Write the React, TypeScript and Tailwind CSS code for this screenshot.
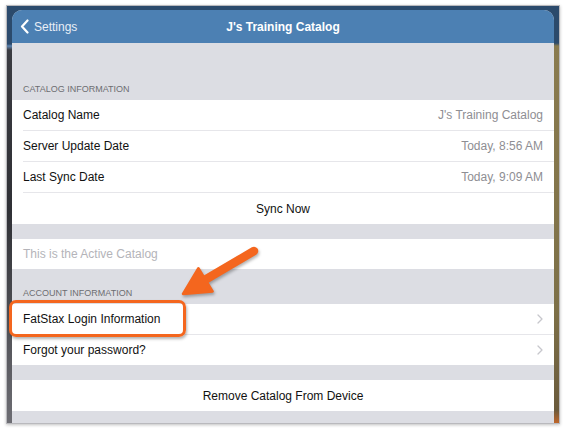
const FONT = { fontFamily: '"Liberation Sans", Arial, sans-serif' };

function Chevron() {
  return (
    <svg width="6" height="10" viewBox="0 0 6 10" aria-hidden>
      <path d="M1 1l4 4-4 4" fill="none" stroke="#c7c7cc" strokeWidth="1.3" strokeLinecap="round" strokeLinejoin="round" />
    </svg>
  );
}

function SectionLabel({ text, height }: { text: string; height: string }) {
  return (
    <div className={`flex items-end px-[11px] pb-[6px] ${height}`}>
      <span className="text-[9px] uppercase leading-[10px] text-[#6d6d72]">{text}</span>
    </div>
  );
}

function Row({
  label,
  value,
  chevron,
  divider,
}: {
  label: string;
  value?: string;
  chevron?: boolean;
  divider?: boolean;
}) {
  return (
    <div className="flex h-[31px] flex-col bg-white pl-[11px]">
      <div className="flex flex-1 items-center justify-between pr-[11px] text-[12px]">
        <span className="text-[#111]">{label}</span>
        {value && <span className="text-[#8e8e93]">{value}</span>}
        {chevron && <Chevron />}
      </div>
      {divider && <div className="h-px bg-[#e6e6ea]" />}
    </div>
  );
}

function Arrow() {
  return (
    <svg
      className="pointer-events-none absolute left-[170px] top-[240px]"
      width="100"
      height="70"
      viewBox="170 240 100 70"
      style={{ filter: "drop-shadow(1px 2px 1.5px rgba(0,0,0,0.3))" }}
      aria-hidden
    >
      <line x1="254" y1="251" x2="203" y2="281" stroke="#f4661e" strokeWidth="8.5" strokeLinecap="round" />
      <polygon
        points="183,294 198.4,268.2 212.6,291.4"
        fill="#f4661e"
        stroke="#f4661e"
        strokeWidth="2.5"
        strokeLinejoin="round"
      />
    </svg>
  );
}

export default function App() {
  return (
    <div className="relative h-[431px] w-[566px] overflow-hidden bg-white pl-[6px] pt-[5px]" style={FONT}>
      <div className="flex h-[419px] w-[554px] flex-col border border-[#b9b9bd] bg-[#2b4a6c] shadow-[0_1px_3px_rgba(0,0,0,0.25)]">
        <div className="h-[4px] shrink-0" />
        <div className="flex flex-1">
          <div className="w-[5px] bg-[linear-gradient(180deg,#2b4a6c_0px,#2b4a6c_34px,#5c83b0_36px,#3a3b41_40px,#2f3035_200px,#6d6d73_100%)]" />
          <div className="flex flex-1 flex-col overflow-hidden rounded-t-[10px] bg-[#dcdde3]">
            <div className="relative flex h-[33px] shrink-0 items-center bg-[#4c80b3] text-white">
              <div className="flex items-center gap-[5px] pl-[8px]">
                <svg width="9" height="15" viewBox="0 0 9 15" aria-hidden>
                  <path d="M7.5 1.5L2 7.5l5.5 6" fill="none" stroke="white" strokeWidth="2.2" strokeLinecap="round" strokeLinejoin="round" />
                </svg>
                <span className="text-[12px] text-[#e8eef6]">Settings</span>
              </div>
              <div className="absolute inset-0 flex items-center justify-center">
                <span className="text-[12px] font-bold">J's Training Catalog</span>
              </div>
            </div>

            <SectionLabel text="Catalog Information" height="h-[57px]" />
            <Row label="Catalog Name" value="J's Training Catalog" divider />
            <Row label="Server Update Date" value="Today, 8:56 AM" divider />
            <Row label="Last Sync Date" value="Today, 9:09 AM" divider />
            <div className="flex h-[31px] items-center justify-center bg-white text-[12px] text-[#111]">Sync Now</div>

            <div className="h-[15px] shrink-0" />
            <div className="flex h-[30px] items-center bg-white px-[11px] text-[12px] text-[#b4b4b9]">
              This is the Active Catalog
            </div>

            <SectionLabel text="Account Information" height="h-[35px]" />
            <Row label="FatStax Login Information" chevron divider />
            <div className="flex h-[30px] items-center justify-between bg-white px-[11px] text-[12px] text-[#111]">
              <span>Forgot your password?</span>
              <Chevron />
            </div>

            <div className="h-[15px] shrink-0" />
            <div className="flex h-[31px] items-center justify-center bg-white text-[12px] text-[#111]">
              Remove Catalog From Device
            </div>
          </div>
          <div className="w-[5px] bg-[linear-gradient(180deg,#2b4a6c_0px,#2b4a6c_33px,#8a7b4f_36px,#7d7048_300px,#6a5a3c_400px,#c0662a_100%)]" />
        </div>
      </div>

      <div className="pointer-events-none absolute left-[9px] top-[300px] h-[37px] w-[177px] rounded-[7px] border-[3.5px] border-[#f4661e] shadow-[1px_2px_3px_rgba(0,0,0,0.3)]" />
      <Arrow />
    </div>
  );
}
